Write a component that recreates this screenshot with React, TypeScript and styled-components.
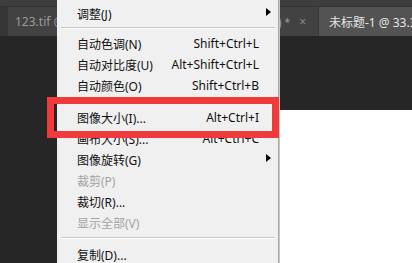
import styled, { createGlobalStyle } from "styled-components";

const GlobalStyle = createGlobalStyle`
  html, body {
    margin: 0;
    padding: 0;
    background: #282828;
  }
  body {
    font-family: "Noto Sans", "Noto Sans CJK SC", sans-serif;
    overflow: hidden;
  }
`;

type Item =
  | { kind: "item"; label: string; shortcut?: string; sub?: boolean; disabled?: boolean }
  | { kind: "sep"; gap: number };

const items: Item[] = [
  { kind: "item", label: "调整(J)", sub: true },
  { kind: "sep", gap: 8 },
  { kind: "item", label: "自动色调(N)", shortcut: "Shift+Ctrl+L" },
  { kind: "item", label: "自动对比度(U)", shortcut: "Alt+Shift+Ctrl+L" },
  { kind: "item", label: "自动颜色(O)", shortcut: "Shift+Ctrl+B" },
  { kind: "sep", gap: 10 },
  { kind: "item", label: "图像大小(I)...", shortcut: "Alt+Ctrl+I" },
  { kind: "item", label: "画布大小(S)...", shortcut: "Alt+Ctrl+C" },
  { kind: "item", label: "图像旋转(G)", sub: true },
  { kind: "item", label: "裁剪(P)", disabled: true },
  { kind: "item", label: "裁切(R)..." },
  { kind: "item", label: "显示全部(V)", disabled: true },
  { kind: "sep", gap: 10 },
  { kind: "item", label: "复制(D)..." },
];

export default function App() {
  return (
    <>
      <GlobalStyle />
      <Screen>
        <TopStrip />
        <TabBar>
          <Tab width={150}>
            <TabLabel>123.tif @ 100% (RGB/8#)</TabLabel>
          </Tab>
          <Tab width={159} align="end">
            <TabLabel>@ 33.3% (图层 0)</TabLabel>
            <Star>*</Star>
            <Close>×</Close>
          </Tab>
          <Tab active>
            <TabLabel>未标题-1 @ 33.3% (RGB/8)</TabLabel>
          </Tab>
        </TabBar>
        <Workspace>
          <Canvas />
        </Workspace>

        <Menu>
          {items.map((it, i) =>
            it.kind === "sep" ? (
              <Separator key={i} gap={it.gap} />
            ) : (
              <Row key={i} disabled={it.disabled}>
                <Label>{it.label}</Label>
                <Shortcut>{it.shortcut ?? ""}</Shortcut>
                <ArrowCell>{it.sub && <Arrow />}</ArrowCell>
              </Row>
            )
          )}
        </Menu>

        <Highlight />
      </Screen>
    </>
  );
}

const Screen = styled.div`
  position: relative;
  width: 412px;
  height: 263px;
  display: flex;
  flex-direction: column;
  overflow: hidden;
  background: #282828;
`;

const TopStrip = styled.div`
  height: 6px;
  background: #3e3e3e;
  border-bottom: 1px solid #323232;
`;

const TabBar = styled.div`
  height: 29px;
  display: flex;
  gap: 1px;
  padding-left: 8px;
  background: #363636;
`;

const Tab = styled.div<{ width?: number; active?: boolean; align?: "start" | "end" }>`
  flex: ${(p) => (p.width ? `0 0 ${p.width}px` : "1 1 auto")};
  box-sizing: border-box;
  display: flex;
  align-items: center;
  justify-content: ${(p) => (p.align === "end" ? "flex-end" : "flex-start")};
  padding: 0 12px 0 ${(p) => (p.active ? "10px" : "7px")};
  overflow: hidden;
  white-space: nowrap;
  background: ${(p) => (p.active ? "#535353" : "#424242")};
  color: ${(p) => (p.active ? "#e6e6e6" : "#9a9a9a")};
  font-size: 12px;
`;

const TabLabel = styled.span`
  white-space: nowrap;
`;

const Star = styled.span`
  margin-left: 3px;
  font-size: 10px;
  color: #9a9a9a;
`;

const Close = styled.span`
  margin-left: 9px;
  font-size: 12px;
  color: #8a8a8a;
`;

const Workspace = styled.div`
  flex: 1;
  display: flex;
  padding: 74px 0 0 200px;
  background: #262626;
`;

const Canvas = styled.div`
  flex: 1;
  background: #ffffff;
`;

const Menu = styled.div`
  position: absolute;
  left: 57px;
  top: 0;
  width: 222px;
  height: 263px;
  padding-top: 3px;
  box-sizing: border-box;
  background: #f0f0f0;
  border-right: 1px solid #a6a6a6;
  box-shadow: 1px 0 0 #c8c8c8;
  font-size: 12px;
  color: #000;
`;

const Row = styled.div<{ disabled?: boolean }>`
  display: grid;
  grid-template-columns: 1fr auto 19px;
  align-items: center;
  height: 21px;
  padding-left: 20px;
  color: ${(p) => (p.disabled ? "#a3a3a3" : "#101010")};
`;

const Label = styled.span`
  white-space: nowrap;
`;

const Shortcut = styled.span`
  white-space: nowrap;
  text-align: right;
`;

const ArrowCell = styled.span`
  display: flex;
  justify-content: center;
  align-items: center;
`;

const Arrow = styled.span`
  width: 0;
  height: 0;
  border-left: 5px solid #000;
  border-top: 4px solid transparent;
  border-bottom: 4px solid transparent;
  margin-top: -3px;
`;

const Separator = styled.div<{ gap: number }>`
  height: 1px;
  margin: ${(p) => `${Math.floor(p.gap / 2) - 1}px 3px ${Math.ceil(p.gap / 2)}px 4px`};
  background: #c8c8c8;
  border-bottom: 1px solid #ffffff;
`;

const Highlight = styled.div`
  position: absolute;
  left: 47px;
  top: 97px;
  width: 232px;
  height: 41px;
  box-sizing: border-box;
  border: 7px solid #ef3b3b;
`;
